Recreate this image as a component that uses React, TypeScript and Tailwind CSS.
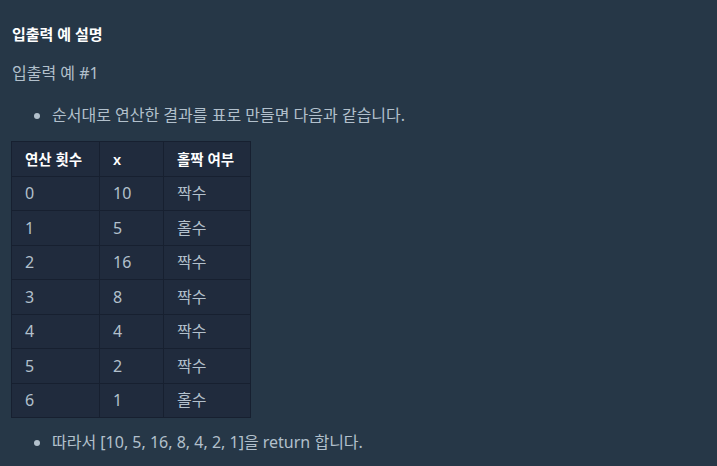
import React from 'react'

const rows: [string, string, string][] = [
  ['0', '10', '짝수'],
  ['1', '5', '홀수'],
  ['2', '16', '짝수'],
  ['3', '8', '짝수'],
  ['4', '4', '짝수'],
  ['5', '2', '짝수'],
  ['6', '1', '홀수'],
]

const font = { fontFamily: '"Noto Sans", "Noto Sans CJK KR", sans-serif' }

export default function App() {
  return (
    <div style={font} className="min-h-[466px] w-[717px] bg-[#263747] px-3 pt-6 text-[#b2c0cc]">
      {/* Explanation heading */}
      <h5 className="text-[15px] font-bold leading-5 text-white">입출력 예 설명</h5>
      <p className="mt-[17px] text-[16px] leading-6">입출력 예 #1</p>

      <ul className="mt-[18px] list-disc pl-10 text-[16px] leading-6 marker:text-[#b2c0cc]">
        <li>순서대로 연산한 결과를 표로 만들면 다음과 같습니다.</li>
      </ul>

      <table className="mt-[14px] -ml-px table-fixed border-collapse bg-[#202b3d] text-[16px] leading-6">
        <colgroup>
          <col className="w-[88px]" />
          <col className="w-[64px]" />
          <col className="w-[87px]" />
        </colgroup>
        <thead>
          <tr>
            <th className="border border-[#172030] px-[13px] py-[4.75px] text-left text-[14.5px] font-semibold whitespace-nowrap text-white">연산 횟수</th>
            <th className="border border-[#172030] px-[13px] py-[4.75px] text-left text-[14.5px] font-semibold text-white">x</th>
            <th className="border border-[#172030] px-[13px] py-[4.75px] text-left text-[14.5px] font-semibold whitespace-nowrap text-white">홀짝 여부</th>
          </tr>
        </thead>
        <tbody>
          {rows.map(([n, x, parity]) => (
            <tr key={n}>
              <td className="border border-[#172030] px-[13px] py-[4.75px]">{n}</td>
              <td className="border border-[#172030] px-[13px] py-[4.75px]">{x}</td>
              <td className="border border-[#172030] px-[13px] py-[4.75px]">{parity}</td>
            </tr>
          ))}
        </tbody>
      </table>

      <ul className="mt-3 list-disc pl-10 text-[16px] leading-6 marker:text-[#b2c0cc]">
        <li>따라서 [10, 5, 16, 8, 4, 2, 1]을 return 합니다.</li>
      </ul>
    </div>
  )
}
